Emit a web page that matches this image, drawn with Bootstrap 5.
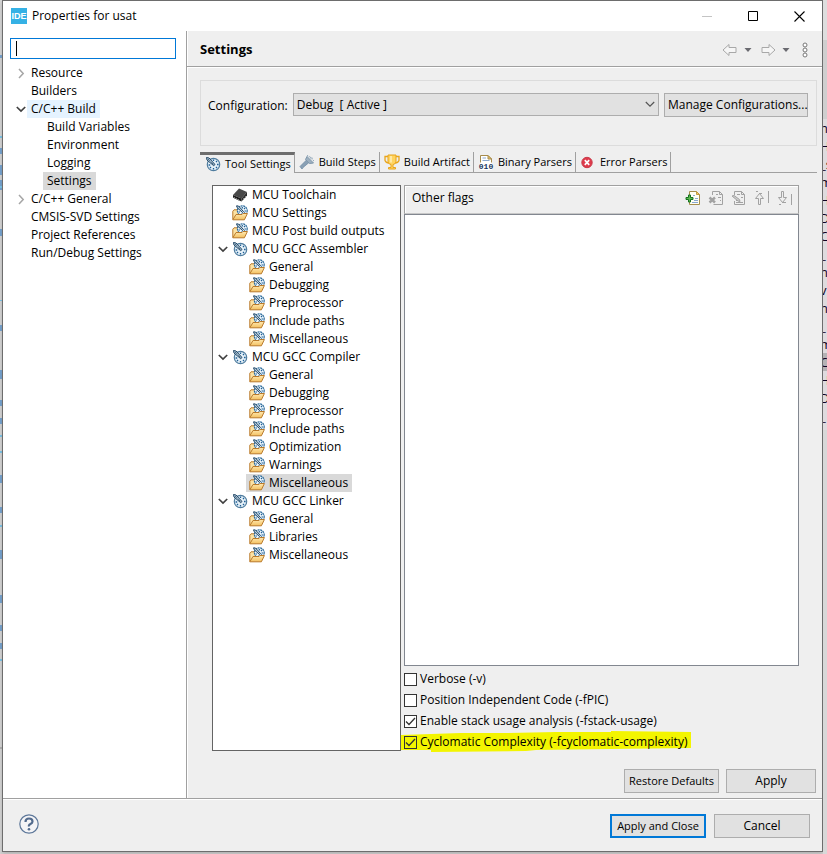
<!DOCTYPE html>
<html lang="en">
<head>
<meta charset="utf-8">
<meta name="viewport" content="width=device-width, initial-scale=1">
<title>Properties for usat</title>
<link href="https://cdn.jsdelivr.net/npm/bootstrap@5.3.0/dist/css/bootstrap.min.css" rel="stylesheet">
<style>
body{font-family:"Open Sans","Noto Sans",sans-serif;font-size:12px;line-height:18px;color:#000;background:#d9d9d9}
a{color:inherit;text-decoration:none}
svg{display:block;flex:none}
.fringe-l{width:2px;background:#d6d6d6}
.fringe-r{width:4px;background:linear-gradient(#dedede 0 40px,#cfcfcf 40px 119px,#dfdbde 119px 430px,#d8d8d8 430px)}
.code-peek{padding-top:119px;font-size:13px;white-space:nowrap;color:#102}
.code-peek div{height:18px;text-indent:-3px}
.code-peek .current{background:#b5b2b5}
.dialog-win{background:#efefef;border:1px solid #6d6d6d;min-height:calc(100vh - 3px);margin-bottom:3px;box-shadow:0 2px 4px #8888}
.title-strip{height:30px;padding-left:8px}
.title-text{padding-left:5px}
.caption-btn{width:46px;height:30px;padding:0;border:0;background:none;display:grid;place-items:center}
.side-pane{width:184px;background:#fff;border-right:1px solid #a0a0a0;box-shadow:1px 0 #fff}
.filter-box{margin:7px 10px 5px 7px;height:21px}
.filter-box input{width:100%;height:21px;border:1px solid #0078d7;padding:0 4px;outline:0;display:block;font-size:13px}
.caret-line{left:6px;top:3px;width:1px;height:15px;background:#000}
.tree-list{list-style:none;margin:0;padding:0}
.tree-line{display:flex;height:18px;align-items:center}
.twist{width:12px;height:18px;border:0;background:none;padding:0;display:grid;place-items:center}
.side-pane .twist{margin-left:12px}
.side-pane .tree-line a{padding:0 4px}
.side-pane .d0 a{margin-left:24px}
.side-pane .twist+a{margin-left:0!important}
.side-pane .d1 a{margin-left:40px}
.hot{background:#e5f3ff}
.picked{background:#d9d9d9}
.page-head{height:36px;border-bottom:1px solid #a0a0a0;box-shadow:0 1px #fff;padding:2px 12px 0 13px}
.page-head h1{font-size:13px;font-weight:700;margin:0}
.tool-ico{border:0;background:none;padding:0}
.hist{margin:0 8px 0 6px}
.view-menu{margin:0 2px 0 4px}
.flag-tools{gap:7px}
.config-group{border:1px solid #dcdcdc;margin:13px 5px 0 13px;padding:12px 8px 28px 7px;gap:5px}
.config-group select{height:23px;border:1px solid #adadad;background:#e1e1e1;padding:0 3px;appearance:none;width:100%;font-size:12px;border-radius:0;color:#000}
.chev{right:4px;top:8px;pointer-events:none}
.w-btn{height:24px;border:1px solid #adadad;background:#e1e1e1;padding:0 3px;font-size:12px;line-height:18px;color:#000;white-space:nowrap;border-radius:0}
.w-btn.default-one{border:2px solid #0078d7}
.tight{font-size:11px}
.tab-strip{margin:6px 5px 0 13px;height:21px}
.tab-strip button{font-size:11px;border:0;border-right:1px solid #a0a0a0;border-bottom:1px solid #a0a0a0;background:none;padding:0 3px 0 4px;display:flex;align-items:center;gap:4px;white-space:nowrap;color:#000}
.tab-strip .t-on{border-top:3px solid #6d6d6d;border-bottom:0;padding-left:5px}
.tab-strip .tab-rest{border-bottom:1px solid #a0a0a0}
.tab-body{margin:12px 23px 0 25px;gap:3px}
.tool-tree{width:189px;border:1px solid #646464;background:#fff;min-height:565px;flex:none}
.tool-tree .tree-line{padding-left:4px}
.tool-tree a{display:flex;align-items:center;gap:4px;padding:0 4px 0 3px;height:18px}
.tool-tree .d0 a{margin-left:12px}
.tool-tree .twist+a{margin-left:0!important}
.tool-tree .d1 a{margin-left:29px}
.flags-head{height:29px;border:1px solid #a0a0a0;border-bottom-color:#c8c8c8;box-shadow:inset 1px 1px #fff;padding:0 5px 3px 7px}
.flags-list{border:1px solid #828790;background:#fff;min-height:452px}
.opt-list{padding-top:4px;display:grid;gap:3px}
.opt-row{height:18px;display:flex;align-items:center;gap:3px;position:relative}
.opt-row label{position:relative}
.opt-row input{appearance:none;width:13px;height:13px;border:1px solid #333;background:#fff;margin:0;position:relative}
.opt-row input:checked{background:#fff url("data:image/svg+xml,%3Csvg xmlns='http://www.w3.org/2000/svg' viewBox='0 0 11 11'%3E%3Cpath d='M1 5.5 4 8.5 10 2' fill='none' stroke='%23333' stroke-width='1.3'/%3E%3C/svg%3E")}
.opt-row .inked:checked{background-color:#f3f500}
.marker{left:-3px;top:-2px}
.page-actions{padding:18px 6px 5px;gap:7px}
.dialog-foot{border-top:1px solid #a0a0a0;box-shadow:inset 0 1px #fff;padding:15px 12px 13px 16px;gap:8px}
.w90{width:90px}.w96{width:96px}.w144{width:144px}.w95{width:95px}
</style>
<script src="https://cdn.jsdelivr.net/npm/bootstrap@5.3.0/dist/js/bootstrap.bundle.min.js"></script>
</head>
<body>
<svg width="0" height="0" class="position-absolute" aria-hidden="true">
<defs>
<linearGradient id="gold" x2="0" y2="1"><stop stop-color="#ffeab5"/><stop offset="1" stop-color="#f3c05e"/></linearGradient>
<symbol id="gauge" viewBox="0 0 16 16"><circle cx="8.5" cy="8.500" r="6.200" fill="#e4f0f8" stroke="#4f7c9e" stroke-width="1.200"/><path d="M8.500 3.500v1.500M8.500 12v1.600M3.600 9h1.600M12 8.500h1.600M5 12l1-1M11 11l1 1M12 5l-1 1" stroke="#1f5f96" stroke-width="1.300"/><path d="M1.500 1.500 4 2l6 6.500-1.300 1.200L2 4z" fill="#b9cfde" stroke="#1f4464"/><path d="M3 3l6 6" stroke="#1d4160" stroke-dasharray="1 1"/></symbol>
<symbol id="folder" viewBox="0 0 16 16"><path d="M.8 14.500V6.200L2 4.800h3l1 1.500h4v3" fill="#fce2a3" stroke="#b97a2b"/><circle cx="10.300" cy="5.700" r="4.900" fill="#edf6fc" stroke="#2e6c9c" stroke-width="1.200" stroke-dasharray="2 .6"/><path d="M10.300 2v1.400M14 6h-1.500M8 7H6.500M13 3l-1 1M10 8.200v1M13 8.500l-1-1" stroke="#1f5f96" stroke-width="1.200"/><path d="M4.600.8 6.500 1l5 5.500-1 1L5 2.500z" fill="#b9cfde" stroke="#1f4464"/><path d="M.8 14.800 4 9.500h6l1-1h4.400l-3 6.300z" fill="url(#gold)" stroke="#b97a2b"/></symbol>
<symbol id="chip" viewBox="0 0 16 16"><path d="M1 8 7 1.500 15 5 9.500 11.500z" fill="#484848"/><path d="M1 8 9.500 11.500v3L1 10.500z" fill="#1c1c1c"/><path d="M9.500 11.500 15 5v3.500l-5.500 6z" fill="#2b2b2b"/><path d="M2.500 10v2M4.500 11v2M6.500 12v2M11.500 11v2M13.500 9v2" stroke="#999" stroke-width=".8"/></symbol>
<symbol id="down" viewBox="0 0 12 12"><path d="M1.800 4 6 8l4.200-4" fill="none" stroke="#404040" stroke-width="1.700"/></symbol>
<symbol id="right" viewBox="0 0 12 12"><path d="m4 2 4.200 4.500L4 11" fill="none" stroke="#a6a6a6" stroke-width="1.500"/></symbol>
<symbol id="arrow" viewBox="0 0 16 14"><path d="M1 7 7 1.500V4.500h7v5H7v3z" fill="#f6f6f6" stroke="#a8a8a8"/></symbol>
<symbol id="tri" viewBox="0 0 8 8"><path d="M.5 2h7L4 6z" fill="#6a6a70"/></symbol>
</defs>
</svg>
<div class="d-flex min-vh-100">
<div class="fringe-l flex-shrink-0" aria-hidden="true"><svg width="2" height="750"><path d="M1 55v3M1 148v6M1 165v10M1 180v10M1 229v7M1 325v6M1 370v9M1 400v6M1 418v6M1 475v8M1 507v6M1 550v9M1 595v8M1 625v6M1 643v6" stroke="#6d9fd0" stroke-width="2"/><path d="M1 136v2M1 186v2M1 300v1M1 435v2M1 451v2M1 525v2M1 659v2" stroke="#72c5ed" stroke-width="2"/><path d="M0 748h2" stroke="#888"/></svg></div>
<div class="dialog-win flex-grow-1 d-flex flex-column">
<header class="title-strip bg-white d-flex align-items-center flex-shrink-0">
<svg width="16" height="16" role="img" aria-label="IDE"><path fill="#35b1e5" d="M0 0h16v16H0z"/><text x="8" y="11" text-anchor="middle" font-family="Liberation Sans,sans-serif" font-size="9" font-weight="700" fill="#fff">IDE</text></svg>
<span class="title-text me-auto">Properties for usat</span>
<button class="caption-btn" aria-label="Minimize"><svg width="11" height="11"><path d="M0 5.500h10" stroke="#c4c4c4"/></svg></button>
<button class="caption-btn" aria-label="Maximize"><svg width="11" height="11"><path d="M.5.5h9v9h-9z" fill="none" stroke="#000"/></svg></button>
<button class="caption-btn" aria-label="Close"><svg width="11" height="11"><path d="m.5.500 10 10M10.500.500l-10 10" stroke="#000" stroke-width="1.100"/></svg></button>
</header>
<div class="d-flex flex-grow-1">
<nav class="side-pane flex-shrink-0">
<div class="filter-box position-relative"><input type="text" aria-label="type filter text"><span class="caret-line position-absolute"></span></div>
<ul class="tree-list">
<li class="tree-line d0"><button class="twist" aria-label="Expand"><svg width="12" height="12"><use href="#right"/></svg></button><a href="#">Resource</a></li>
<li class="tree-line d0"><a href="#">Builders</a></li>
<li class="tree-line d0"><button class="twist" aria-label="Collapse"><svg width="12" height="12"><use href="#down"/></svg></button><a href="#" class="hot">C/C++ Build</a></li>
<li class="tree-line d1"><a href="#">Build Variables</a></li>
<li class="tree-line d1"><a href="#">Environment</a></li>
<li class="tree-line d1"><a href="#">Logging</a></li>
<li class="tree-line d1"><a href="#" class="picked">Settings</a></li>
<li class="tree-line d0"><button class="twist" aria-label="Expand"><svg width="12" height="12"><use href="#right"/></svg></button><a href="#">C/C++ General</a></li>
<li class="tree-line d0"><a href="#">CMSIS-SVD Settings</a></li>
<li class="tree-line d0"><a href="#">Project References</a></li>
<li class="tree-line d0"><a href="#">Run/Debug Settings</a></li>
</ul>
</nav>
<main class="flex-grow-1 d-flex flex-column">
<div class="page-head d-flex align-items-center">
<h1 class="me-auto">Settings</h1>
<button class="tool-ico" aria-label="Back"><svg width="16" height="14"><use href="#arrow"/></svg></button>
<button class="tool-ico hist" aria-label="Back history"><svg width="8" height="8"><use href="#tri"/></svg></button>
<button class="tool-ico" aria-label="Forward"><svg width="16" height="14"><g transform="matrix(-1 0 0 1 16 0)"><use href="#arrow"/></g></svg></button>
<button class="tool-ico hist" aria-label="Forward history"><svg width="8" height="8"><use href="#tri"/></svg></button>
<button class="tool-ico view-menu" aria-label="View menu"><svg width="6" height="16" viewBox="0 0 6 16" fill="#fff" stroke="#777"><circle cx="3" cy="3" r="2"/><circle cx="3" cy="8" r="2"/><circle cx="3" cy="13" r="2"/></svg></button>
</div>
<div class="config-group d-flex align-items-start">
<label for="cfg" class="pt-1">Configuration:</label>
<div class="position-relative flex-grow-1"><select id="cfg"><option>Debug&nbsp; [ Active ]</option></select><svg class="chev position-absolute" width="10" height="7"><path d="m.8 1 4.200 4.200L9.200 1" fill="none" stroke="#555" stroke-width="1.200"/></svg></div>
<button class="w-btn w144">Manage Configurations...</button>
</div>
<div class="tab-strip d-flex" role="tablist">
<button role="tab" class="t-on" aria-selected="true"><svg width="16" height="16"><use href="#gauge"/></svg>Tool Settings</button>
<button role="tab"><svg width="16" height="16"><path d="M1 12.500 7.500 6l2.500 2.500-6 5-1 1.500z" fill="#8aa0b4" stroke="#6f8ca5" stroke-width=".8"/><path d="M6.500 5.500 8 2.500 14.500 9l-4 .5z" fill="#9eb0c0" stroke="#7f97ab"/><path d="M8 1.500l6 3M11 3.500l4 3.500" stroke="#718fa8" stroke-dasharray="1 1"/></svg>Build Steps</button>
<button role="tab"><svg width="16" height="16"><path d="M4 2.500H1v4Q2 9 5 9M12 2.500h3v4Q14 9 11 9" fill="none" stroke="#e8a51c" stroke-width="1.300"/><path d="M4 1h8v7q-1 2.500-3 2.500v3h2.500V15h-7v-1.500H7v-3Q5 10.500 4 8z" fill="#ffd461" stroke="#e8a51c"/><path d="M7 2v6.500" stroke="#fff0bd" stroke-width="1.500"/></svg>Build Artifact</button>
<button role="tab"><svg width="16" height="16"><path d="M2.500 15V1.500H10L13.500 5v10z" fill="#fff" stroke="#a68b4c"/><path d="M10 1.500V5h3.500z" fill="#f0cb68" stroke="#a68b4c"/><path d="M4.500 4H8M4.500 6.500h7" stroke="#8ba9cd"/><path d="M2 8.500h12V16H2z" fill="#fff"/><text x="8" y="15" text-anchor="middle" font-family="Liberation Mono,monospace" font-size="8" font-weight="700" fill="#16345e">010</text></svg>Binary Parsers</button>
<button role="tab"><svg width="16" height="16"><circle cx="7" cy="8.500" r="5.200" fill="#df3b4c" stroke="#c83a49"/><path d="m4.800 6.200 4.400 4.600M9.200 6.200l-4.400 4.600" stroke="#fff" stroke-width="1.700"/></svg>Error Parsers</button>
<div class="tab-rest flex-grow-1"></div>
</div>
<div class="tab-body d-flex flex-grow-1">
<ul class="tree-list tool-tree">
<li class="tree-line d0"><a href="#"><svg width="16" height="16"><use href="#chip"/></svg>MCU Toolchain</a></li>
<li class="tree-line d0"><a href="#"><svg width="16" height="16"><use href="#folder"/></svg>MCU Settings</a></li>
<li class="tree-line d0"><a href="#"><svg width="16" height="16"><use href="#folder"/></svg>MCU Post build outputs</a></li>
<li class="tree-line d0"><button class="twist" aria-label="Collapse"><svg width="12" height="12"><use href="#down"/></svg></button><a href="#"><svg width="16" height="16"><use href="#gauge"/></svg>MCU GCC Assembler</a></li>
<li class="tree-line d1"><a href="#"><svg width="16" height="16"><use href="#folder"/></svg>General</a></li>
<li class="tree-line d1"><a href="#"><svg width="16" height="16"><use href="#folder"/></svg>Debugging</a></li>
<li class="tree-line d1"><a href="#"><svg width="16" height="16"><use href="#folder"/></svg>Preprocessor</a></li>
<li class="tree-line d1"><a href="#"><svg width="16" height="16"><use href="#folder"/></svg>Include paths</a></li>
<li class="tree-line d1"><a href="#"><svg width="16" height="16"><use href="#folder"/></svg>Miscellaneous</a></li>
<li class="tree-line d0"><button class="twist" aria-label="Collapse"><svg width="12" height="12"><use href="#down"/></svg></button><a href="#"><svg width="16" height="16"><use href="#gauge"/></svg>MCU GCC Compiler</a></li>
<li class="tree-line d1"><a href="#"><svg width="16" height="16"><use href="#folder"/></svg>General</a></li>
<li class="tree-line d1"><a href="#"><svg width="16" height="16"><use href="#folder"/></svg>Debugging</a></li>
<li class="tree-line d1"><a href="#"><svg width="16" height="16"><use href="#folder"/></svg>Preprocessor</a></li>
<li class="tree-line d1"><a href="#"><svg width="16" height="16"><use href="#folder"/></svg>Include paths</a></li>
<li class="tree-line d1"><a href="#"><svg width="16" height="16"><use href="#folder"/></svg>Optimization</a></li>
<li class="tree-line d1"><a href="#"><svg width="16" height="16"><use href="#folder"/></svg>Warnings</a></li>
<li class="tree-line d1"><a href="#" class="picked"><svg width="16" height="16"><use href="#folder"/></svg>Miscellaneous</a></li>
<li class="tree-line d0"><button class="twist" aria-label="Collapse"><svg width="12" height="12"><use href="#down"/></svg></button><a href="#"><svg width="16" height="16"><use href="#gauge"/></svg>MCU GCC Linker</a></li>
<li class="tree-line d1"><a href="#"><svg width="16" height="16"><use href="#folder"/></svg>General</a></li>
<li class="tree-line d1"><a href="#"><svg width="16" height="16"><use href="#folder"/></svg>Libraries</a></li>
<li class="tree-line d1"><a href="#"><svg width="16" height="16"><use href="#folder"/></svg>Miscellaneous</a></li>
</ul>
<section class="flex-grow-1 d-flex flex-column">
<div class="flags-head d-flex align-items-center">
<span class="me-auto">Other flags</span>
<div class="d-flex flag-tools">
<button class="tool-ico" aria-label="Add"><svg width="16" height="16"><path d="M4.500 14.500v-13h7l3 3v10z" fill="#fffef4" stroke="#a58e4d"/><path d="M11.500 1.500v3h3z" fill="#f0cb68" stroke="#c29a40"/><path d="M8 5.500h2M10 8.500h3M9 10.500h4M7 12.500h6" stroke="#89a8d0"/><path d="M3.500 5h2v2.500H8v2H5.500V12h-2V9.500H1v-2h2.500z" fill="#5cba50" stroke="#15711e"/></svg></button>
<button class="tool-ico" aria-label="Delete"><svg width="16" height="16" fill="none" stroke="#a2a2a2"><path d="M4.500 5V1.500h7l3 3v10h-9M11.500 1.500v3h3M8 4.500h2M10 7.500h3M12 10.500h1"/><path d="m1.500 7.500 5.500 5M7 7.500l-5.500 5" stroke-width="2.400"/></svg></button>
<button class="tool-ico" aria-label="Edit"><svg width="16" height="16" fill="none" stroke="#a2a2a2"><path d="M3.500 5V1.500h7l3 3v10h-10V11M10.500 1.500v3h3M6 4.500h3M10 7.500h2M5 10.500h2M5 12.500h7"/><path d="m1 6 2-.5 5.500 4 .5 2-2-.5z" fill="#ccc"/></svg></button>
<button class="tool-ico" aria-label="Move up"><svg width="16" height="16" fill="none" stroke="#a2a2a2"><path d="M2 1.500h2M5 3.500h3M4.500 14.500v-6h-3l4-5 4 5h-3v6zM14.500 1v12"/></svg></button>
<button class="tool-ico" aria-label="Move down"><svg width="16" height="16" fill="none" stroke="#a2a2a2"><path d="M4.500 1.500v6h-3l4 5 4-5h-3v-6zM2 14.500h2M5 12.500h4M14.500 4v11"/></svg></button>
</div></div>
<div class="flags-list flex-grow-1" role="listbox" aria-label="Other flags"></div>
<div class="opt-list">
<div class="opt-row"><input type="checkbox" id="o1"><label for="o1">Verbose (-v)</label></div>
<div class="opt-row"><input type="checkbox" id="o2"><label for="o2">Position Independent Code (-fPIC)</label></div>
<div class="opt-row"><input type="checkbox" id="o3" checked><label for="o3">Enable stack usage analysis (-fstack-usage)</label></div>
<div class="opt-row"><svg class="marker position-absolute" width="290" height="21"><path d="M0 4 60 2h45l50-1h55V0l80 1v16l-80 1-75 1-10 1-95 1V19H0z" fill="#f3f500"/></svg><input type="checkbox" id="o4" class="inked" checked><label for="o4">Cyclomatic Complexity (-fcyclomatic-complexity)</label></div>
</div>
</section>
</div>
<div class="page-actions d-flex justify-content-end"><button class="w-btn w95 tight">Restore Defaults</button><button class="w-btn w90">Apply</button></div>
</main>
</div>
<footer class="dialog-foot d-flex align-items-start">
<button class="tool-ico me-auto" aria-label="Help"><svg width="20" height="20"><circle cx="10" cy="10" r="9.200" fill="#f4f4f6" stroke="#5d7799" stroke-width="1.200"/><path d="M6.500 8q0-3.500 3.500-3.500T13.500 7.500Q13.500 9 11.500 10T10 12.500" fill="none" stroke="#536b8d" stroke-width="2.200"/><circle cx="10" cy="15.200" r="1.300" fill="#536b8d"/></svg></button>
<button class="w-btn w96 default-one tight">Apply and Close</button><button class="w-btn w96">Cancel</button>
</footer>
</div>
<div class="fringe-r flex-shrink-0 overflow-hidden" aria-hidden="true"><div class="code-peek"><div>h</div><div>H</div><div>_s</div><div>m</div><div>H</div><div>D</div><div>C</div><div>_</div><div>n</div><div>v</div><div>n</div><div>_</div><div>m</div><div class="current">C</div><div>H</div><div>D</div><div>_</div></div></div>
</div>
</body>
</html>
